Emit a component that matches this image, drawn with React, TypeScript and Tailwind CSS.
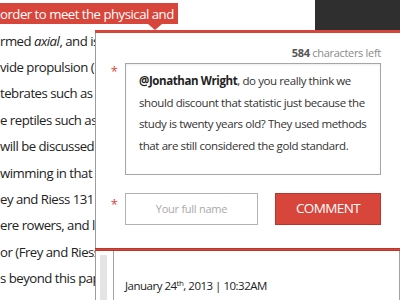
const LINES = [
  <>rmed <em>axial</em>, and is</>,
  <>vide propulsion (</>,
  <>tebrates such as</>,
  <>e reptiles such as</>,
  <>will be discussed</>,
  <>wimming in that</>,
  <>ey and Riess 131</>,
  <>ere rowers, and l</>,
  <>or (Frey and Riess</>,
  <>s beyond this pap</>,
];

function Highlight() {
  return (
    <div className="h-[27.6px] pt-[3px]">
      <span className="relative inline-block h-[21px] leading-[23px] bg-[#d8453b] text-white pr-[4px] align-top">
        order to meet the physical and
        {/* pointer down to the comment box */}
        <span className="absolute left-[148px] top-full w-0 h-0 border-l-[7px] border-r-[7px] border-t-[6px] border-l-transparent border-r-transparent border-t-[#d8453b]" />
      </span>
    </div>
  );
}

function CommentForm() {
  return (
    <div className="h-[215px] border-l border-[#9c9c9c] pt-[12px]">
      <div className="pr-[19px] text-right text-[11px] tracking-[-0.3px] leading-[16px] text-[#8a8a8a]">
        <span className="font-bold text-[#555]">584</span> characters left
      </div>

      <div className="flex mt-[2px]">
        <div className="w-[29px] flex justify-end pr-[7px] pt-[1px] text-[13px] leading-[14px] text-[#d8453b]">*</div>
        <div className="w-[256px] h-[112px] border border-[#a6a6a6] shadow-[inset_0_1px_2px_rgba(0,0,0,0.08)] pl-[13px] pt-[6px] text-[11.5px] tracking-[-0.4px] leading-[21.6px] text-[#333] whitespace-nowrap">
          <div><span className="font-bold text-[#222]">@Jonathan Wright</span>, do you really think we</div>
          <div>should discount that statistic just because the</div>
          <div>study is twenty years old? They used methods</div>
          <div>that are still considered the gold standard.</div>
        </div>
      </div>

      <div className="flex mt-[18px]">
        <div className="w-[29px] flex justify-end pr-[7px] pt-[4px] text-[13px] leading-[14px] text-[#d8453b]">*</div>
        <div className="w-[133px] h-[32px] border border-[#b3b3b3] flex items-center justify-center text-[11px] tracking-[-0.25px] text-[#a9a9a9]">
          Your full name
        </div>
        <button className="ml-[17px] w-[106px] h-[32px] bg-[#d8453b] border border-[#b5362d] text-white text-[13.5px] tracking-[-0.6px] leading-none">
          COMMENT
        </button>
      </div>
    </div>
  );
}

export default function App() {
  return (
    <div className="relative w-[400px] h-[300px] overflow-hidden bg-white font-['Open_Sans',sans-serif]">
      <div className="text-[13.2px] tracking-[-0.5px] text-[#222] whitespace-nowrap">
        <Highlight />
        {LINES.map((l, i) => (
          <div key={i} className="h-[26.4px] leading-[26.4px]">{l}</div>
        ))}
      </div>

      {/* header block */}
      <div className="absolute top-0 right-0 w-[85px] h-[30px] bg-[#2f2f2f]" />

      {/* comment popover */}
      <div className="absolute left-[95px] top-[30px] right-0 bottom-0 flex flex-col bg-white">
        <div className="h-[3px] bg-[#d8453b]" />
        <CommentForm />
        <div className="h-[3px] bg-[#d8453b] border-y border-[#b8372e]" />
        <div className="flex-1 flex border-l border-[#9c9c9c]">
          <div className="ml-[4px] mt-[4px] w-[7px] bg-[#e4e4e4]" />
          <div className="ml-[6px] flex-1 border-l border-r border-[#a3a3a3] pl-[11px] pt-[27px] text-[11.5px] tracking-[-0.5px] leading-[16px] text-[#222]">
            January 24<span className="relative -top-[4px] text-[8px]">th</span>, 2013 | 10:32AM
          </div>
        </div>
      </div>
    </div>
  );
}
